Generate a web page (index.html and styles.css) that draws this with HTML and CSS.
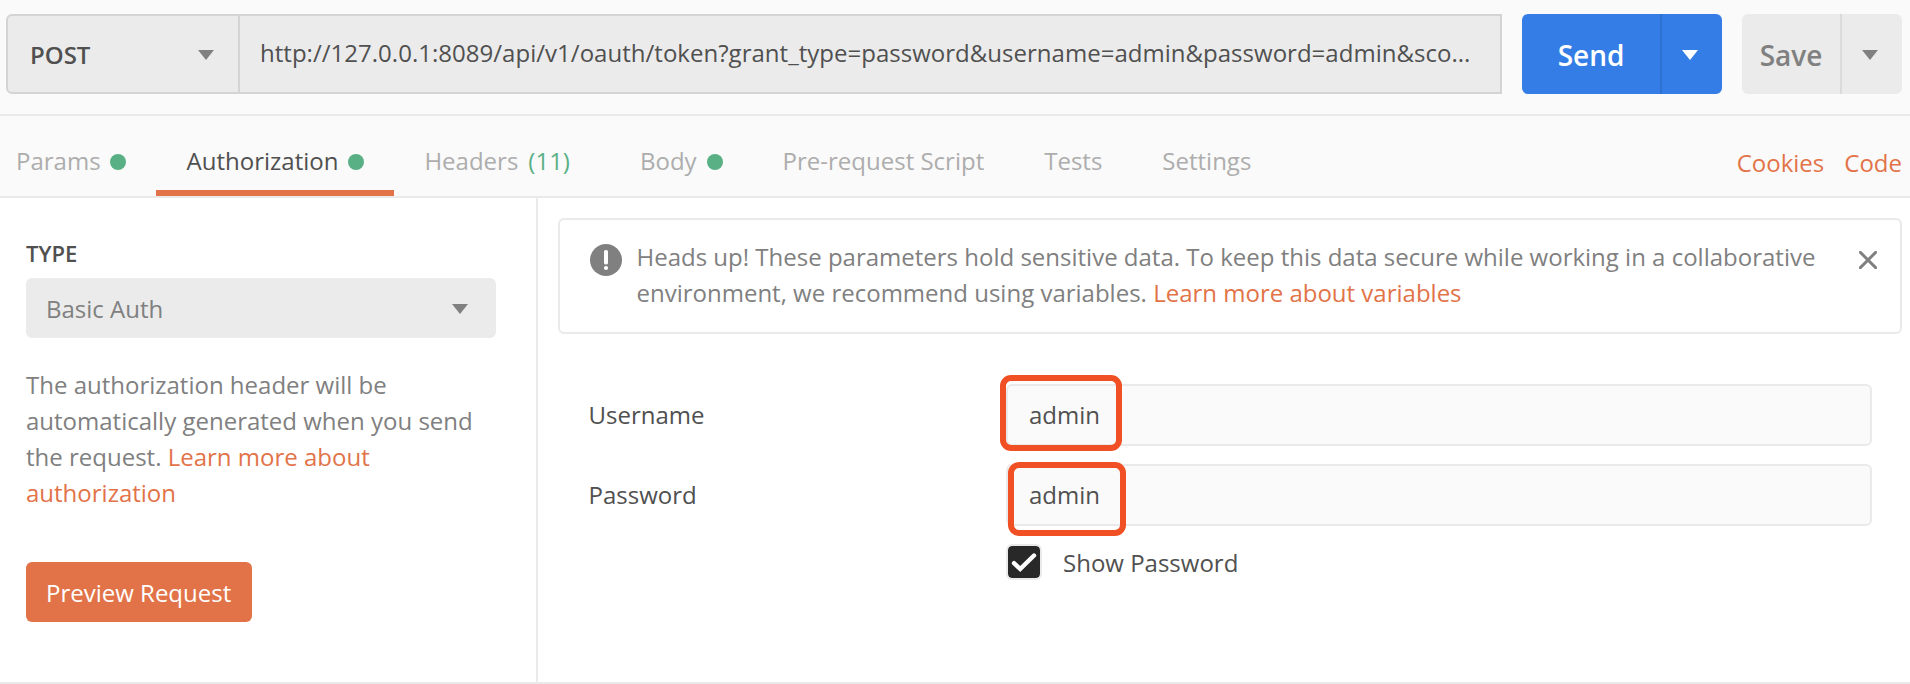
FILE: index.html
```html
<!DOCTYPE html>
<html lang="en">
<head>
<meta charset="utf-8">
<title>Request</title>
<link rel="stylesheet" href="styles.css">
</head>
<body>
<div class="app">
  <header class="request-bar">
    <div class="address">
      <div class="method"><span>POST</span><svg class="caret" viewBox="0 0 16 10"><path d="M0 0h16L8 10z"/></svg></div>
      <div class="url">http://127.0.0.1:8089/api/v1/oauth/token?grant_type=password&amp;username=admin&amp;password=admin&amp;sco...</div>
    </div>
    <div class="split send">
      <div class="split-label">Send</div>
      <div class="split-menu"><svg class="caret" viewBox="0 0 16 10"><path d="M0 0h16L8 10z"/></svg></div>
    </div>
    <div class="split save">
      <div class="split-label">Save</div>
      <div class="split-menu"><svg class="caret" viewBox="0 0 16 10"><path d="M0 0h16L8 10z"/></svg></div>
    </div>
  </header>
  <nav class="tabs">
    <div class="tab">Params<i class="dot"></i></div>
    <div class="tab active">Authorization<i class="dot"></i></div>
    <div class="tab">Headers<span class="count">(11)</span></div>
    <div class="tab">Body<i class="dot"></i></div>
    <div class="tab">Pre-request Script</div>
    <div class="tab">Tests</div>
    <div class="tab">Settings</div>
    <div class="links"><a>Cookies</a><a>Code</a></div>
  </nav>
  <main class="content">
    <aside class="sidebar">
      <div class="type-label">TYPE</div>
      <div class="select"><span>Basic Auth</span><svg class="caret" viewBox="0 0 16 10"><path d="M0 0h16L8 10z"/></svg></div>
      <p class="hint">The authorization header will be automatically generated when you send the request. <a>Learn more about authorization</a></p>
      <div class="preview">Preview Request</div>
    </aside>
    <section class="panel">
      <div class="alert">
        <svg class="alert-icon" viewBox="0 0 32 32"><circle cx="16" cy="16" r="16" fill="#808080"/><rect x="14" y="6" width="4" height="14.4" rx="1.6" fill="#fff"/><circle cx="16" cy="24" r="2.1" fill="#fff"/></svg>
        <p class="alert-text">Heads up! These parameters hold sensitive data. To keep this data secure while working in a collaborative<br>environment, we recommend using variables. <a>Learn more about variables</a></p>
        <svg class="close" viewBox="0 0 18 18"><path d="M1.4 1.4l15.2 15.2M16.600 1.400L1.400 16.600" stroke="#808080" stroke-width="2.900" stroke-linecap="round" fill="none"/></svg>
      </div>
      <div class="form">
        <div class="field"><label>Username</label><div class="input">admin<div class="mark mark-user"></div></div></div>
        <div class="field"><label>Password</label><div class="input">admin<div class="mark mark-pass"></div></div></div>
        <div class="show">
          <div class="checkbox"><svg viewBox="0 0 32 32"><path d="M6 17.200l6.200 5.800L26 9.500" stroke="#fff" stroke-width="4.400" stroke-linecap="round" stroke-linejoin="miter" fill="none"/></svg></div>
          <span>Show Password</span>
        </div>
      </div>
    </section>
  </main>
</div>
</body>
</html>
```
FILE: styles.css
```css
* { box-sizing: border-box; }
body {
  margin: 0;
  font: 24px/36px "Open Sans", "Noto Sans", sans-serif;
  color: #505050;
  background: #fff;
  overflow: hidden;
}
p { margin: 0; }
a { color: #e27348; }
svg { display: block; flex: none; }
.caret { width: 16px; height: 10px; fill: #808080; }
.app {
  width: 1910px;
  height: 684px;
  display: flex;
  flex-direction: column;
  border-bottom: 2px solid #eaeaea;
}

.request-bar {
  height: 116px;
  display: flex;
  gap: 20px;
  padding: 14px 8px 20px 6px;
  background: #fafafa;
  border-bottom: 2px solid #eaeaea;
}
.address {
  flex: 1;
  display: flex;
  background: #ebebeb;
  border: 2px solid #d4d4d4;
  border-radius: 6px 0 0 6px;
}
.method {
  width: 232px;
  display: flex;
  align-items: center;
  justify-content: space-between;
  padding: 1px 24px 0 22px;
  font-weight: 600;
  border-right: 2px solid #d4d4d4;
}
.url {
  flex: 1;
  padding: 19px 0 0 20px;
  white-space: nowrap;
  letter-spacing: 0.02px;
}
.split {
  display: flex;
  height: 80px;
  border-radius: 6px;
  font-size: 28px;
  font-weight: 600;
}
.split-label, .split-menu {
  display: flex;
  align-items: center;
  justify-content: center;
}
.split-label { flex: 1; padding-top: 1px; }
.split-menu { width: 62px; padding: 2px 4px 0 0; border-left: 2px solid; }
.send { width: 200px; background: #347de6; color: #fff; }
.send .split-menu { border-color: #2f71d1; }
.send .caret { fill: #fff; }
.save { width: 160px; background: #ebebeb; color: #808080; }
.save .split-menu { border-color: #dbdbdb; }

.tabs {
  height: 82px;
  display: flex;
  background: #fafafa;
  border-bottom: 2px solid #eaeaea;
  color: #adadad;
  padding-right: 8px;
}
.tab {
  display: flex;
  align-items: center;
  padding: 9px 30px 0;
  white-space: nowrap;
}
.tab:first-child { padding-left: 16px; }
.tab:first-child .dot { margin-left: 9px; }
.tab.active {
  color: #505050;
  padding-left: 31px;
  box-shadow: inset 0 -6px #e27348;
}
.dot {
  width: 16px;
  height: 16px;
  margin: 3px 0 0 10px;
  border-radius: 50%;
  background: #59b084;
}
.count { margin: 0 10px; color: #59b084; }
.links {
  margin-left: auto;
  display: flex;
  align-items: center;
  gap: 20px;
  padding-top: 13px;
}

.content { flex: 1; display: flex; }
.sidebar {
  width: 538px;
  padding: 37px 40px 0 26px;
  border-right: 2px solid #eaeaea;
}
.type-label {
  font-size: 22px;
  font-weight: 600;
  height: 43px;
}
.select {
  height: 60px;
  display: flex;
  align-items: center;
  justify-content: space-between;
  padding: 1px 28px 0 20px;
  background: #ebebeb;
  border-radius: 6px;
  color: #808080;
}
.hint { margin-top: 29px; color: #808080; }
.preview {
  width: 226px;
  height: 60px;
  margin-top: 51px;
  padding: 13px 0 0 20px;
  border-radius: 6px;
  background: #e27348;
  color: #fff;
  white-space: nowrap;
}

.panel { flex: 1; padding: 20px 8px 0 20px; }
.alert {
  height: 116px;
  display: flex;
  padding: 18px 23px 0 30px;
  border: 2px solid #eaeaea;
  border-radius: 6px;
}
.alert-icon { width: 32px; height: 32px; margin-top: 6px; }
.alert-text { flex: 1; margin: 1px 0 0 14.5px; color: #808080; white-space: nowrap; }
.close { width: 18px; height: 18px; margin-top: 13px; }
.form {
  display: flex;
  flex-direction: column;
  gap: 18px;
  padding: 50px 30px 0 30px;
}
.field { display: flex; height: 62px; }
.field label { width: 418px; padding: 13px 0 0 0.5px; }
.input {
  position: relative;
  flex: 1;
  padding: 11px 0 0 21px;
  background: #fafafa;
  border: 2px solid #eaeaea;
  border-radius: 6px;
}
.mark {
  position: absolute;
  border: 6px solid #f05023;
  border-radius: 11px;
}
.mark-user { left: -8px; top: -11px; width: 122px; height: 76px; }
.mark-pass { left: 0; top: -4px; width: 118px; height: 74px; }
.show { display: flex; margin-left: 418px; }
.checkbox {
  width: 36px;
  height: 36px;
  border: 2px solid #eaeaea;
  border-radius: 6px;
  background: #282828;
  background-clip: padding-box;
}
.checkbox svg { width: 32px; height: 32px; }
.show span { margin: 1px 0 0 21px; }
```
